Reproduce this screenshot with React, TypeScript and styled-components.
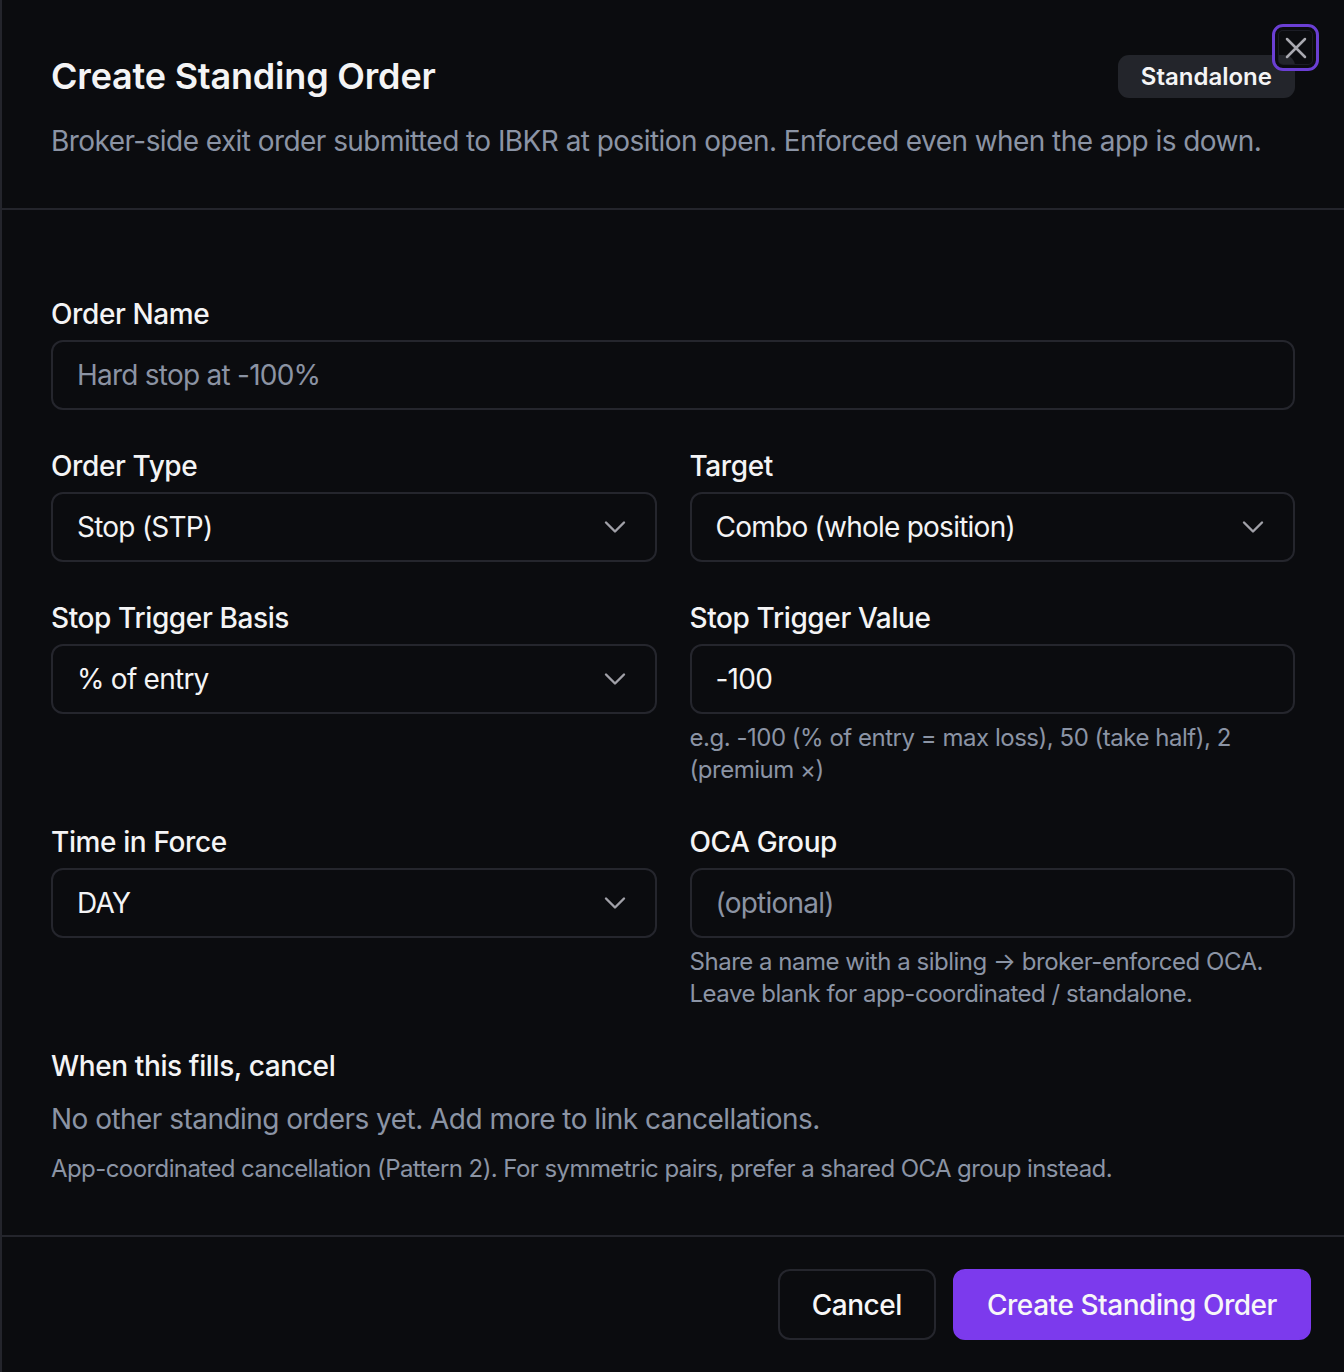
import styled, { createGlobalStyle } from "styled-components";

const GlobalStyle = createGlobalStyle`
  html, body {
    margin: 0;
    padding: 0;
    background: #0b0c0f;
  }
  body {
    font-family: Inter, "Noto Sans", "Liberation Sans", sans-serif;
    -webkit-font-smoothing: antialiased;
  }
  * { box-sizing: border-box; }
`;

const Dialog = styled.div`
  position: relative;
  width: 1344px;
  height: 1372px;
  background: #0b0c0f;
  border-left: 2px solid #24252c;
  display: flex;
  flex-direction: column;
  letter-spacing: -0.024em;
`;

const Header = styled.div`
  padding: 54px 49px 46px 49px;
  border-bottom: 2px solid #24252c;
`;

const TitleRow = styled.div`
  display: flex;
  align-items: center;
  justify-content: space-between;
`;

const Title = styled.h2`
  margin: 0;
  font-size: 36px;
  line-height: 44px;
  font-weight: 600;
  color: #f4f4f5;
  letter-spacing: -0.2px;
`;

const Badge = styled.span`
  display: inline-flex;
  align-items: center;
  height: 43px;
  padding: 0 23px;
  border-radius: 11px;
  background: #23252b;
  color: #f4f4f5;
  font-size: 24px;
  font-weight: 600;
  letter-spacing: 0;
`;

const Description = styled.p`
  margin: 22px 0 0 0;
  font-size: 28px;
  line-height: 42px;
  color: #8b94a5;
  white-space: nowrap;
  letter-spacing: -0.02em;
`;

const CloseButton = styled.button`
  position: absolute;
  top: 24px;
  left: 1270px;
  width: 47px;
  height: 47px;
  border: 3px solid #6b3fd4;
  border-radius: 11px;
  background: transparent;
  display: flex;
  align-items: center;
  justify-content: center;
  padding: 0;
  color: #a9a9b0;
  box-shadow: inset 0 0 0 3px #0b0c0f, inset 0 0 0 4px #1c1d26;
`;

const Body = styled.div`
  padding: 84px 49px 46px 49px;
  display: flex;
  flex-direction: column;
  gap: 36px;
  flex: 1;
`;

const Grid = styled.div`
  display: grid;
  grid-template-columns: 1fr 1fr;
  column-gap: 33px;
  row-gap: 36px;
`;

const Field = styled.div`
  display: flex;
  flex-direction: column;
`;

const Label = styled.label`
  font-size: 28px;
  line-height: 40px;
  font-weight: 500;
  color: #f4f4f5;
  margin-bottom: 6px;
`;

const Box = styled.div<{ $muted?: boolean }>`
  height: 70px;
  border: 2px solid #25262d;
  border-radius: 12px;
  display: flex;
  align-items: center;
  justify-content: space-between;
  padding: 0 22px 0 24px;
  font-size: 28px;
  letter-spacing: -0.027em;
  color: ${(p) => (p.$muted ? "#8b93a3" : "#f4f4f5")};
`;

const Hint = styled.p`
  margin: 8px 0 0 0;
  font-size: 24px;
  line-height: 32px;
  color: #8b94a5;
  letter-spacing: -0.02em;
`;

const Section = styled.div`
  display: flex;
  flex-direction: column;
`;

const SectionTitle = styled.h3`
  margin: 0;
  font-size: 28px;
  line-height: 40px;
  font-weight: 500;
  color: #f4f4f5;
`;

const Empty = styled.p`
  margin: 13px 0 0 0;
  font-size: 28px;
  line-height: 40px;
  color: #8b94a5;
  letter-spacing: -0.019em;
`;

const Note = styled.p`
  margin: 14px 0 0 0;
  font-size: 24px;
  line-height: 32px;
  color: #8b94a5;
  letter-spacing: -0.024em;
`;

const Footer = styled.div`
  border-top: 2px solid #24252c;
  padding: 32px 33px 32px 33px;
  display: flex;
  justify-content: flex-end;
  gap: 17px;
`;

const Button = styled.button<{ $primary?: boolean }>`
  height: 71px;
  padding: 0 32px;
  border-radius: 12px;
  font-family: inherit;
  font-size: 28px;
  font-weight: 500;
  letter-spacing: -0.016em;
  color: #f7f7f8;
  border: 2px solid ${(p) => (p.$primary ? "#7c3aed" : "#25262d")};
  background: ${(p) => (p.$primary ? "#7c3aed" : "transparent")};
`;

const Chevron = () => (
  <svg width="36" height="36" viewBox="0 0 24 24" fill="none" stroke="#a1a1a8" strokeWidth="1.6" strokeLinecap="round" strokeLinejoin="round">
    <path d="m6 9 6 6 6-6" />
  </svg>
);

const Select = ({ value }: { value: string }) => (
  <Box>
    <span>{value}</span>
    <Chevron />
  </Box>
);

export default function App() {
  return (
    <>
      <GlobalStyle />
      <Dialog>
        <Header>
          <TitleRow>
            <Title>Create Standing Order</Title>
            <Badge>Standalone</Badge>
          </TitleRow>
          <Description>
            Broker-side exit order submitted to IBKR at position open. Enforced even when the app is down.
          </Description>
        </Header>
        <CloseButton aria-label="Close">
          <svg width="36" height="36" viewBox="0 0 24 24" fill="none" stroke="currentColor" strokeWidth="1.7" strokeLinecap="round">
            <path d="M18 6 6 18M6 6l12 12" />
          </svg>
        </CloseButton>
        <Body>
          <Field>
            <Label>Order Name</Label>
            <Box $muted>Hard stop at -100%</Box>
          </Field>
          <Grid>
            <Field>
              <Label>Order Type</Label>
              <Select value="Stop (STP)" />
            </Field>
            <Field>
              <Label>Target</Label>
              <Select value="Combo (whole position)" />
            </Field>
            <Field>
              <Label>Stop Trigger Basis</Label>
              <Select value="% of entry" />
            </Field>
            <Field>
              <Label>Stop Trigger Value</Label>
              <Box>-100</Box>
              <Hint>e.g. -100 (% of entry = max loss), 50 (take half), 2 (premium ×)</Hint>
            </Field>
            <Field>
              <Label>Time in Force</Label>
              <Select value="DAY" />
            </Field>
            <Field>
              <Label>OCA Group</Label>
              <Box $muted>(optional)</Box>
              <Hint>
                Share a name with a sibling → broker-enforced OCA. Leave blank for app-coordinated / standalone.
              </Hint>
            </Field>
          </Grid>
          <Section>
            <SectionTitle>When this fills, cancel</SectionTitle>
            <Empty>No other standing orders yet. Add more to link cancellations.</Empty>
            <Note>
              App-coordinated cancellation (Pattern 2). For symmetric pairs, prefer a shared OCA group instead.
            </Note>
          </Section>
        </Body>
        <Footer>
          <Button>Cancel</Button>
          <Button $primary>Create Standing Order</Button>
        </Footer>
      </Dialog>
    </>
  );
}
